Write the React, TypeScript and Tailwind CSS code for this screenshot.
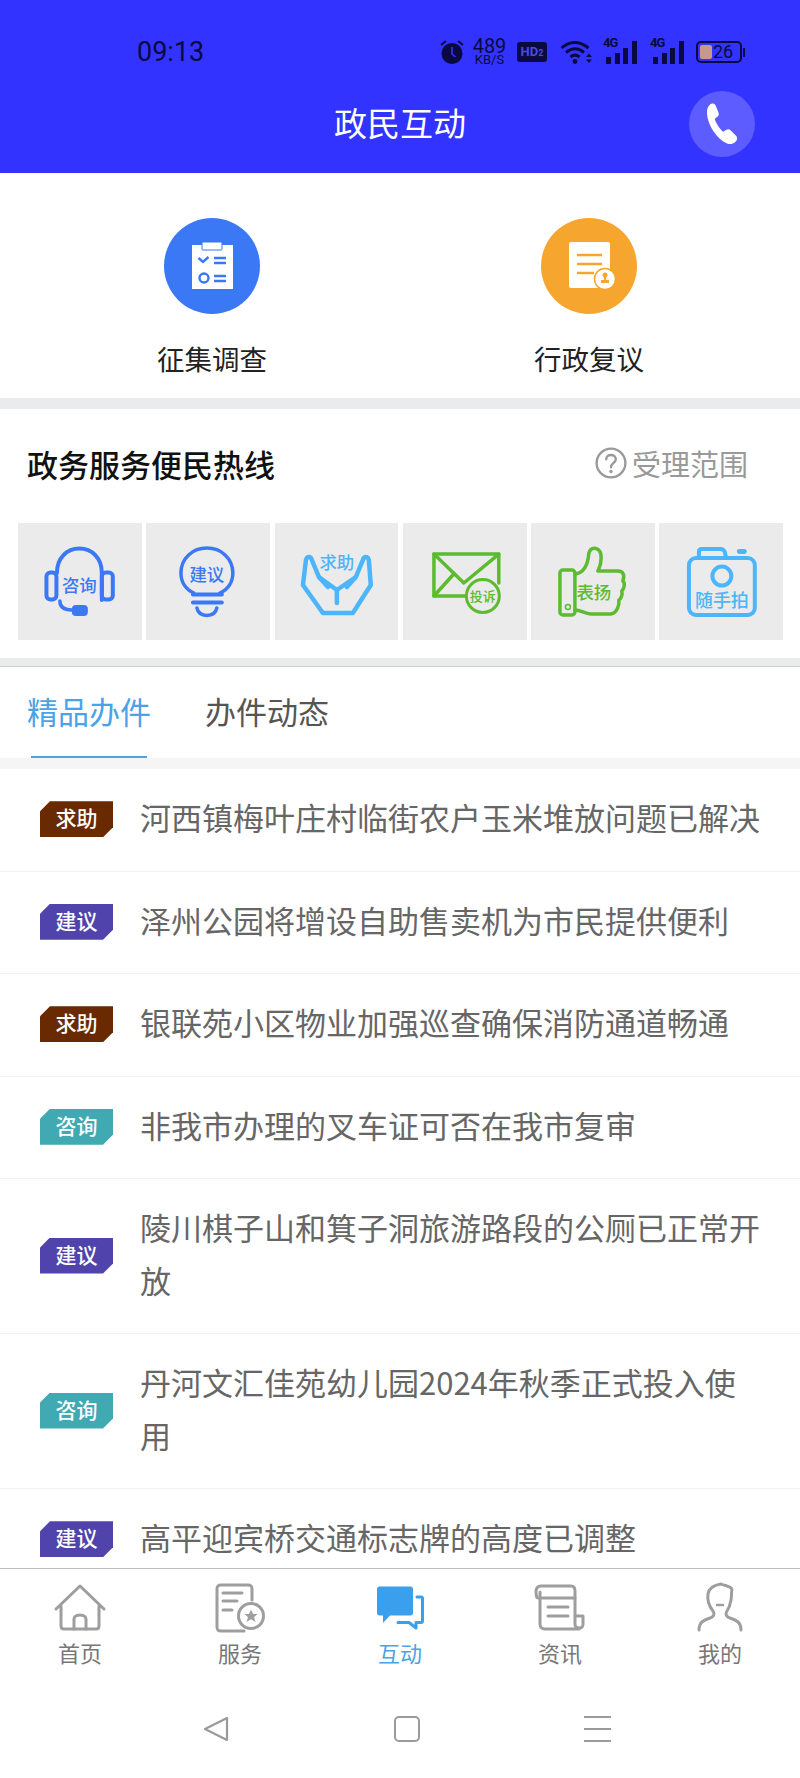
import type { ReactNode } from 'react';

const cjk = { fontFamily: '"Noto Sans CJK SC", sans-serif' };
const BLUE = '#3b78f5';
const SKY = '#4db5fb';
const GREEN = '#5dbb2f';

type Tag = '求助' | '建议' | '咨询';

const TAG_CLASS: Record<Tag, string> = {
  求助: 'bg-[#692a02]',
  建议: 'bg-[#5044ac]',
  咨询: 'bg-[#40a9b1]',
};

const rows: { tag: Tag; title: string }[] = [
  { tag: '求助', title: '河西镇梅叶庄村临街农户玉米堆放问题已解决' },
  { tag: '建议', title: '泽州公园将增设自助售卖机为市民提供便利' },
  { tag: '求助', title: '银联苑小区物业加强巡查确保消防通道畅通' },
  { tag: '咨询', title: '非我市办理的叉车证可否在我市复审' },
  { tag: '建议', title: '陵川棋子山和箕子洞旅游路段的公厕已正常开放' },
  { tag: '咨询', title: '丹河文汇佳苑幼儿园2024年秋季正式投入使用' },
  { tag: '建议', title: '高平迎宾桥交通标志牌的高度已调整' },
];

function Label({ x, y, size, color, children }: { x: number; y: number; size: number; color: string; children: ReactNode }) {
  return (
    <text x={x} y={y} fontSize={size} fontWeight={500} fill={color} textAnchor="middle" dominantBaseline="central" stroke="none" style={cjk}>
      {children}
    </text>
  );
}

function TileIcon({ children }: { children: ReactNode }) {
  return (
    <div className="h-[117px] bg-[#ebebeb]">
      <svg viewBox="0 0 124 117" className="w-full h-full" fill="none" strokeLinecap="round" strokeLinejoin="round">
        {children}
      </svg>
    </div>
  );
}

function Signal({ className }: { className: string }) {
  return (
    <div className={`relative w-[34px] h-[24px] ${className}`}>
      <span className="absolute left-0 top-[-3px] text-[13px] font-bold leading-[12px] tracking-[-1px]">4G</span>
      <div className="absolute left-[3px] right-0 bottom-0 flex items-end justify-between h-[24px]">
        <i className="block w-[5px] h-[7px] bg-[#0a0a40]" />
        <i className="block w-[5px] h-[11px] bg-[#0a0a40]" />
        <i className="block w-[5px] h-[16px] bg-[#0a0a40]" />
        <i className="block w-[5px] h-[23px] bg-[#0a0a40]" />
      </div>
    </div>
  );
}

function StatusBar() {
  return (
    <div className="h-[80px] pt-[24px] pl-[137px] pr-[55px] flex items-center justify-between text-[#0a0a40]" style={{ fontFamily: 'Roboto, sans-serif' }}>
      <span className="text-[27px] leading-none">09:13</span>
      <div className="flex items-center">
        <svg viewBox="0 0 24 26" className="w-[24px] h-[26px]">
          <circle cx="12" cy="14.500" r="10.500" fill="currentColor" />
          <path d="M12 8v7l3.500 3" stroke="#3333ff" strokeWidth="1.600" fill="none" />
          <path d="M1 6l5-4M23 6l-5-4" stroke="currentColor" strokeWidth="2" />
        </svg>
        <div className="ml-[9px] w-[33px] flex flex-col items-center">
          <span className="text-[20px] leading-[16px]">489</span>
          <span className="text-[13px] leading-[12px]">KB/S</span>
        </div>
        <div className="ml-[11px] w-[30px] h-[20px] rounded-[3px] bg-[#0a0a40] text-[#4a4ae0] text-[13px] font-bold leading-[20px] text-center">HD<span className="text-[9px]">2</span></div>
        <svg viewBox="0 0 33 24" className="ml-[13px] w-[33px] h-[24px]">
          <path d="M1.500 8C9.500 0.500 19.500 0.500 28.500 8M6 12.500C12 7.500 18 7.500 24 12.500M10.500 17C13.500 14.500 16.500 14.500 19.500 17" stroke="currentColor" strokeWidth="3" fill="none" />
          <circle cx="15" cy="21.500" r="2.400" fill="currentColor" />
          <path d="M26 17l3-3.500 3 3.500zM26 19.500h6l-3 3.500z" fill="currentColor" />
        </svg>
        <Signal className="ml-[10px]" />
        <Signal className="ml-[13px]" />
        <div className="ml-[12px] flex items-center">
          <div className="relative w-[46px] h-[22px] rounded-[5px] border-2 border-[#0a0a40] overflow-hidden flex items-center justify-center pl-[8px]">
            <div className="absolute left-[2px] top-[2px] bottom-[2px] w-[12px] bg-[#c8988c] rounded-[2px]" />
            <span className="relative text-[18px] leading-none">26</span>
          </div>
          <div className="ml-[1px] w-[2px] h-[9px] bg-[#0a0a40]" />
        </div>
      </div>
    </div>
  );
}

function Header() {
  return (
    <header className="bg-[#3333ff] shrink-0">
      <StatusBar />
      <div className="relative h-[93px] pb-[9px] flex items-center justify-center">
        <h1 className="text-[33px] leading-none font-normal text-white">政民互动</h1>
        <div className="absolute right-[45px] top-[11px] w-[66px] h-[66px] rounded-full bg-[#5c5cff] flex items-center justify-center">
          <svg viewBox="0 0 34 44" className="w-[34px] h-[44px]" fill="white">
            <path d="M5 2.500C7 1 9.500 1.300 10.500 3.300L13.500 10.500C14.300 12.500 13.500 14 12 15L10.300 16.200C9.800 16.600 9.700 17.200 10 17.900C11.700 21.800 14 25.500 17.200 29C17.800 29.600 18.400 29.700 19 29.300L21 28C22.800 26.900 24.500 27.300 25.800 28.600L31 33.800C32.600 35.500 32.500 37.700 31 39.200C28.800 41.600 25.500 42.800 22 41.500C12 37 3 24 2 12C1.800 8 2.500 4.500 5 2.500Z" />
          </svg>
        </div>
      </div>
    </header>
  );
}

function HeroItem({ bg, label, children }: { bg: string; label: string; children: ReactNode }) {
  return (
    <div className="w-[120px] flex flex-col items-center">
      <div className={`w-[96px] h-[96px] rounded-full ${bg}`}>
        <svg viewBox="0 0 96 96" className="w-[96px] h-[96px]">{children}</svg>
      </div>
      <span className="mt-[28px] text-[27.500px] leading-[32px] text-[#222]">{label}</span>
    </div>
  );
}

function HeroRow() {
  return (
    <section className="h-[225px] pt-[45px] pl-[152px] pr-[151px] flex justify-between">
      <HeroItem bg="bg-[#3b78f5]" label="征集调查">
        <path d="M28 27h10v5h20v-5h11v44H28z" fill="white" />
        <rect x="38" y="24" width="20" height="8" rx="1" fill="white" stroke="#3b78f5" strokeWidth="1" />
        <path d="M34.500 40l4.500 4 5.500-5" stroke="#3b78f5" strokeWidth="2.400" fill="none" />
        <path d="M50 40h12M50 45h12M50 58h12M50 63h12" stroke="#3b78f5" strokeWidth="2.400" />
        <circle cx="40" cy="60" r="4.500" fill="none" stroke="#3b78f5" strokeWidth="2.400" />
      </HeroItem>
      <HeroItem bg="bg-[#f6a52f]" label="行政复议">
        <rect x="28" y="24" width="41" height="46" rx="2" fill="white" />
        <path d="M36 37h25M36 46h25M36 55h17" stroke="#f6a52f" strokeWidth="2.500" />
        <circle cx="64" cy="61" r="10.500" fill="white" stroke="#f6a52f" strokeWidth="1.500" />
        <circle cx="64" cy="57" r="2.500" fill="#f6a52f" />
        <path d="M63 59h2v3h3v3h-8v-3h3z" fill="#f6a52f" />
      </HeroItem>
    </section>
  );
}

function HotlineTiles() {
  return (
    <div className="grid grid-cols-6 gap-[4.500px] pl-[18px] pr-[17px]">
      <TileIcon>
        <path d="M39 50C39 35 49 25.500 61.500 25.500S84 35 84 50V77" stroke={BLUE} strokeWidth="4" />
        <rect x="28.500" y="49.500" width="10" height="27" rx="4" stroke={BLUE} strokeWidth="4" />
        <rect x="84" y="49.500" width="11" height="27" rx="4" stroke={BLUE} strokeWidth="4" />
        <path d="M42 78C42 84 46 87 54 87" stroke={BLUE} strokeWidth="3.500" />
        <rect x="54" y="82" width="16" height="11" rx="4" fill={BLUE} />
        <Label x={61.500} y={62} size={17.500} color={BLUE}>咨询</Label>
      </TileIcon>
      <TileIcon>
        <path d="M48 70C39 66 35 58 35 50C35 35 47 25 61 25S87 35 87 50C87 58 83 66 74 70" stroke={BLUE} strokeWidth="3.500" />
        <path d="M47 71.500H76M47 79.500H76" stroke={BLUE} strokeWidth="4" />
        <path d="M51 85C52 90 56 92.500 61 92.500S70 90 71 85" stroke={BLUE} strokeWidth="3.500" />
        <Label x={61} y={50} size={17.500} color={BLUE}>建议</Label>
      </TileIcon>
      <TileIcon>
        <path d="M37 37C36 33 32 33 31 37L28 62L48 90H78L96 62L94 37C93 33 89 33 88 37L81 54L62 67L44 54Z" stroke={SKY} strokeWidth="4.500" />
        <path d="M44 54L53 64M81 54L72 64M62 67V80" stroke={SKY} strokeWidth="4.500" />
        <Label x={62} y={38} size={17.500} color={SKY}>求助</Label>
      </TileIcon>
      <TileIcon>
        <path d="M64 73H31V31H96V60" stroke={GREEN} strokeWidth="3.500" />
        <path d="M31 31L61 60L96 31M31 73L50 52" stroke={GREEN} strokeWidth="3.500" />
        <circle cx="80" cy="73" r="16.500" fill="#ebebeb" stroke={GREEN} strokeWidth="3" />
        <Label x={80} y={73} size={13} color={GREEN}>投诉</Label>
      </TileIcon>
      <TileIcon>
        <rect x="29" y="47" width="15" height="45" rx="3" stroke={GREEN} strokeWidth="3.500" />
        <circle cx="37" cy="84" r="2.500" stroke={GREEN} strokeWidth="1.500" />
        <path d="M44 51C53 50 57 42 58 30C60 23 68 24 70 31C71 38 69 44 67 48H87C93 48 94 53 92 58C95 60 93 66 91 68C92 72 90 76 88 77C89 82 86 90 80 91H60C54 91 50 87 44 87" stroke={GREEN} strokeWidth="3.500" />
        <Label x={63} y={69} size={17.500} color={GREEN}>表扬</Label>
      </TileIcon>
      <TileIcon>
        <path d="M40 34V29C40 27 41 26 43 26H62C64 26 65 27 66 29L67 34" stroke={SKY} strokeWidth="4" />
        <rect x="30" y="35" width="66" height="57" rx="7" stroke={SKY} strokeWidth="4" />
        <rect x="78" y="26" width="10" height="5" rx="2.500" fill={SKY} />
        <circle cx="63" cy="53" r="9.500" stroke={SKY} strokeWidth="4" />
        <Label x={63} y={76} size={18} color={SKY}>随手拍</Label>
      </TileIcon>
    </div>
  );
}

function Hotline() {
  return (
    <section className="pb-[18px]">
      <div className="h-[114px] pl-[27px] pr-[52px] pb-[6px] flex items-center justify-between">
        <h2 className="text-[31px] leading-none font-medium text-[#111]">政务服务便民热线</h2>
        <div className="flex items-center gap-[5px] text-[#999]">
          <svg viewBox="0 0 30 30" className="w-[32px] h-[32px]" fill="none" stroke="#999" strokeWidth="2.200">
            <circle cx="15" cy="15" r="13.500" />
            <path d="M10.500 11.500C10.500 9 12.500 7.500 15 7.500S19.500 9 19.500 11.500C19.500 15 15 15 15 19" strokeLinecap="round" />
            <circle cx="15" cy="23" r="1.600" fill="#999" stroke="none" />
          </svg>
          <span className="text-[29px] leading-none">受理范围</span>
        </div>
      </div>
      <HotlineTiles />
    </section>
  );
}

function Tabs() {
  return (
    <div className="h-[91px] pl-[27px] flex gap-[54px] shrink-0">
      <div className="relative pb-[4px] flex items-center text-[31px] leading-none text-[#4aa3e8]">
        精品办件
        <div className="absolute left-[4px] right-[4px] bottom-0 h-[2px] bg-[#4aa3e8]" />
      </div>
      <div className="pb-[4px] flex items-center text-[31px] leading-none text-[#555]">办件动态</div>
    </div>
  );
}

function ListRow({ tag, title }: { tag: Tag; title: string }) {
  return (
    <div className="pt-[24px] pb-[25px] pl-[40px] pr-[37px] flex items-center gap-[27px] border-b border-[#f3f3f3]">
      <span className={`w-[73px] h-[36px] pb-[3px] shrink-0 flex items-center justify-center text-[21px] font-medium leading-none text-white [clip-path:polygon(10px_0,100%_0,100%_26px,calc(100%-10px)_100%,0_100%,0_10px)] ${TAG_CLASS[tag]}`}>
        {tag}
      </span>
      <p className="-translate-y-[2px] text-[31px] leading-[52.500px] text-[#666] [overflow-wrap:anywhere]">{title}</p>
    </div>
  );
}

function NavItem({ label, active, children }: { label: string; active?: boolean; children: ReactNode }) {
  return (
    <div className={`flex flex-col items-center ${active ? 'text-[#4aa3e8]' : 'text-[#777]'}`}>
      <svg viewBox="0 0 60 52" className="w-[60px] h-[52px]" fill="none" stroke="#9e9e9e" strokeWidth="3" strokeLinecap="round" strokeLinejoin="round">
        {children}
      </svg>
      <span className="mt-[4px] text-[22px] leading-[28px]">{label}</span>
    </div>
  );
}

function BottomNav() {
  return (
    <nav className="h-[210px] shrink-0 bg-white border-t border-[#bdbdbd] flex flex-col">
      <div className="grid grid-cols-5 h-[130px] pt-[13px]">
        <NavItem label="首页">
          <path d="M6 27L30 4L54 27M11 24V44C11 46 12 47 14 47H46C48 47 49 46 49 44V24" />
          <path d="M24 47V37C24 35 26 33 30 33S36 35 36 37V47" />
        </NavItem>
        <NavItem label="服务">
          <path d="M34 49H11C8 49 7 48 7 45V7C7 4 8 3 11 3H38C41 3 42 4 42 7V18M13 11H32M13 19H27M13 28H22" />
          <circle cx="41" cy="34" r="12.500" />
          <path d="M41 27.500L43 32H47.500L44 35.200L45.500 40L41 37.200L36.500 40L38 35.200L34.500 32H39Z" fill="#9e9e9e" stroke="none" />
        </NavItem>
        <NavItem label="互动" active>
          <path d="M7 7C7 5.500 8 4.500 9.500 4.500H40.500C42 4.500 43 5.500 43 7V31C43 32.500 42 33.500 40.500 33.500H20L13 41V33.500H9.500C8 33.500 7 32.500 7 31Z" fill="#3aa0ee" stroke="none" />
          <path d="M47 15H51C52 15 52.500 15.500 52.500 16.500V39C52.500 40 52 40.500 51 40.500H46V46L39 40.500H28" stroke="#3aa0ee" strokeWidth="3" />
        </NavItem>
        <NavItem label="资讯">
          <path d="M10 16H8C7 16 6 14 6 10C6 6 8 4 11 4H41C44 4 45 6 45 9V34V42C45 45 47 46 49 46C52 46 53 45 53 42V34H45" />
          <path d="M10 10V42C10 45 12 47 15 47H49M10 16H45M18 25H38M18 34H38" />
        </NavItem>
        <NavItem label="我的">
          <path d="M9 48C9 40 14 38 20 36C24 34.500 25 32 23 29C19 24 17 18 18 12C19 6 24 3 31 2C35 4 42 4 42 8C41 9 42 12 41 18C40 24 39 26 37 29C35 32 36 34.500 40 36C46 38 51 40 51 48" />
          <path d="M27 23H33" strokeWidth="2.500" />
        </NavItem>
      </div>
      <div className="flex-1 pl-[203px] pr-[189px] flex items-start justify-between pt-[17px]">
        <svg viewBox="0 0 26 26" className="w-[26px] h-[26px]" fill="none" stroke="#9a9a9a" strokeWidth="2.200" strokeLinejoin="round">
          <path d="M2 13L24 2V24Z" />
        </svg>
        <div className="w-[26px] h-[26px] rounded-[5px] border-2 border-[#9a9a9a]" />
        <div className="w-[27px] h-[26px] flex flex-col justify-between">
          <div className="h-[2px] bg-[#9a9a9a]" />
          <div className="h-[2px] bg-[#9a9a9a]" />
          <div className="h-[2px] bg-[#9a9a9a]" />
        </div>
      </div>
    </nav>
  );
}

export default function App() {
  return (
    <div className="w-[800px] h-[1778px] bg-white flex flex-col overflow-hidden" style={cjk}>
      <Header />
      <main className="flex-1 min-h-0 overflow-hidden">
        <HeroRow />
        <div className="h-[11px] bg-[#e9ebec]" />
        <Hotline />
        <div className="h-[9px] bg-[#e9ebec] border-b border-[#cfcfcf]" />
        <Tabs />
        <div className="h-[11px] bg-[#f5f5f5]" />
        {rows.map((r) => (
          <ListRow key={r.title} tag={r.tag} title={r.title} />
        ))}
      </main>
      <BottomNav />
    </div>
  );
}
